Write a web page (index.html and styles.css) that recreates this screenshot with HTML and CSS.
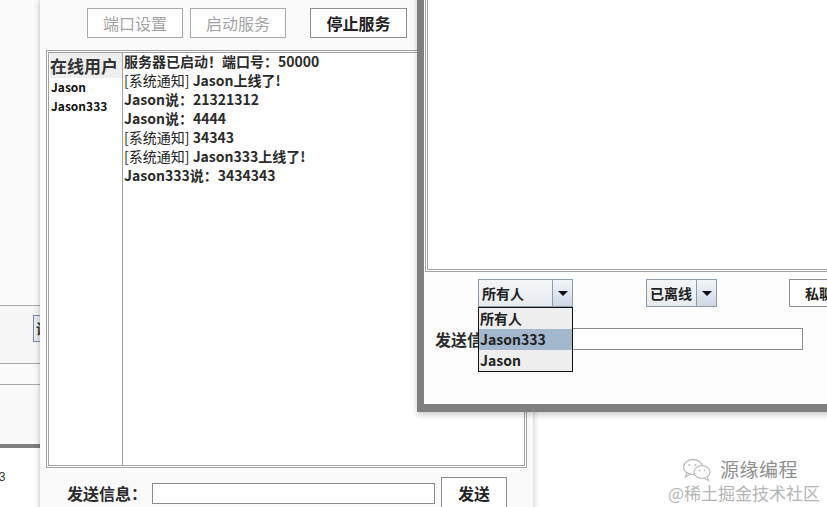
FILE: index.html
```html
<!DOCTYPE html>
<html lang="zh-CN">
<head>
  <meta charset="UTF-8">
  <meta name="viewport" content="width=device-width, initial-scale=1.0">
  <title>聊天室服务器</title>
  <link rel="stylesheet" href="styles.css">
</head>
<body>
  <div class="desktop">

    <!-- 后面那个窗口，只露出一条边 -->
    <div class="win win-back">
      <div class="back-sec back-top"></div>
      <div class="back-sec back-btnrow"><span class="back-btn">诶</span></div>
      <div class="back-sec back-mid"></div>
      <div class="back-sec back-low"></div>
      <div class="back-frame"></div>
      <div class="back-text">13</div>
    </div>

    <!-- 服务器窗口 -->
    <div class="win win-server">
      <div class="toolbar">
        <button class="btn" disabled>端口设置</button>
        <button class="btn" disabled>启动服务</button>
        <button class="btn btn-stop">停止服务</button>
      </div>

      <div class="panel">
        <div class="users">
          <div class="users-head">在线用户</div>
          <div class="user">Jason</div>
          <div class="user">Jason333</div>
        </div>
        <div class="messages">
          <div class="msg">服务器已启动！端口号：50000</div>
          <div class="msg"><span class="sys">[系统通知]</span> Jason上线了!</div>
          <div class="msg">Jason说：21321312</div>
          <div class="msg">Jason说：4444</div>
          <div class="msg"><span class="sys">[系统通知]</span> 34343</div>
          <div class="msg"><span class="sys">[系统通知]</span> Jason333上线了!</div>
          <div class="msg">Jason333说：3434343</div>
        </div>
      </div>

      <div class="send-row">
        <label class="send-label">发送信息：</label>
        <input class="send-input" type="text">
        <button class="btn btn-send">发送</button>
      </div>
    </div>

    <!-- 客户端窗口 -->
    <div class="win win-client">
      <div class="client-area"></div>

      <div class="combo-row">
        <div class="combo combo-target">
          <span class="combo-text">所有人</span>
          <span class="combo-arrow"></span>
        </div>
        <div class="combo combo-status">
          <span class="combo-text">已离线</span>
          <span class="combo-arrow"></span>
        </div>
        <button class="btn btn-private">私聊</button>
      </div>

      <div class="client-send">
        <label class="send-label">发送信息：</label>
        <input class="client-input" type="text">
      </div>

      <ul class="combo-list">
        <li>所有人</li>
        <li class="selected">Jason333</li>
        <li>Jason</li>
      </ul>
    </div>

    <div class="watermark">
      <div class="wm-top">
        <svg class="wm-icon" width="30" height="24" viewBox="0 0 30 24">
          <ellipse cx="11" cy="9" rx="9.5" ry="7.5" fill="none" stroke="#bdbdbd" stroke-width="1.3"/>
          <path d="M5 15 L3.5 19 L8.5 16" fill="none" stroke="#bdbdbd" stroke-width="1.3"/>
          <ellipse cx="20" cy="14" rx="8" ry="6.3" fill="#fff" stroke="#bdbdbd" stroke-width="1.3"/>
          <path d="M25 19 L26.5 22.5 L22 20" fill="#fff" stroke="#bdbdbd" stroke-width="1.3"/>
          <circle cx="7.5" cy="7" r="1.1" fill="#bdbdbd"/>
          <circle cx="13.5" cy="7" r="1.1" fill="#bdbdbd"/>
          <circle cx="17.5" cy="12.5" r="0.9" fill="#bdbdbd"/>
          <circle cx="22.5" cy="12.5" r="0.9" fill="#bdbdbd"/>
        </svg>
        <span class="wm-name">源缘编程</span>
      </div>
      <div class="wm-site">@稀土掘金技术社区</div>
    </div>

  </div>
</body>
</html>
```

FILE: styles.css
```css
* {
  box-sizing: border-box;
}

body {
  margin: 0;
  background: #fff;
  font-family: "Noto Sans CJK SC", "Microsoft YaHei", sans-serif;
  color: #2b2b2b;
}

.desktop {
  position: relative;
  width: 827px;
  height: 507px;
  overflow: hidden;
  background: #fff;
}

.win {
  position: absolute;
}

/* ---------- 后面的窗口 ---------- */

.win-back {
  left: -360px;
  top: 0;
  width: 400px;
  height: 507px;
  background: #f7f7f7;
}

.back-sec {
  border-bottom: 1px solid #a8a8a8;
}

.back-top {
  height: 306px;
  background: #fbfbfb;
}

.back-btnrow {
  height: 58px;
  display: flex;
  justify-content: flex-end;
  align-items: flex-start;
  padding-top: 9px;
}

.back-btn {
  display: block;
  width: 30px;
  height: 27px;
  margin-right: -23px;
  border: 1px solid #7a89ad;
  background: #e8ecf3;
  font-size: 14px;
  font-weight: bold;
  line-height: 25px;
  padding-left: 2px;
  color: #333;
}

.back-mid {
  height: 21px;
  background: #fbfbfb;
}

.back-low {
  height: 59px;
  border-bottom: none;
  background: #f9f9f9;
}

.back-frame {
  height: 4px;
  background: #7f7f7f;
}

.back-text {
  height: 60px;
  background: #fff;
  padding: 22px 0 0 352px;
  font-family: "Liberation Sans", sans-serif;
  font-size: 12px;
  color: #333;
}

/* ---------- 服务器窗口 ---------- */

.win-server {
  left: 40px;
  top: 0;
  width: 493px;
  height: 540px;
  background: #fafafa;
  box-shadow: 0 0 6px rgba(0, 0, 0, 0.28);
}

.btn {
  height: 30px;
  border: 1px solid #8e8e8e;
  background: #fff;
  font-family: inherit;
  font-size: 16px;
  color: #222;
  padding: 0;
  cursor: pointer;
}

.btn:disabled {
  color: #a3a3a3;
  border-color: #a8a8a8;
  cursor: default;
}

.toolbar {
  display: flex;
  padding: 8px 0 0 47px;
}

.toolbar .btn {
  width: 96px;
  margin-right: 7px;
}

.toolbar .btn-stop {
  width: 97px;
  margin-left: 17px;
  font-weight: bold;
}

.panel {
  display: flex;
  margin: 12px 0 0 6px;
  width: 481px;
  height: 418px;
  border: 3px double #a2a2a2;
  background: #fff;
}

.users {
  width: 75px;
  height: 414px;
  margin-top: -1px;
  margin-left: -1px;
  border: 1px solid #a2a2a2;
  border-top: none;
}

.users-head {
  height: 25px;
  margin: 1px 0 0 1px;
  background: #eeeeee;
  font-size: 17px;
  font-weight: bold;
  line-height: 25px;
  color: #333;
}

.user {
  height: 19px;
  line-height: 17px;
  padding-left: 2px;
  font-size: 12px;
  font-weight: bold;
  color: #111;
}

.messages {
  padding: 0 0 0 1px;
}

.msg {
  height: 19px;
  line-height: 17px;
  font-size: 14px;
  font-weight: bold;
  color: #2b2b2b;
  white-space: nowrap;
}

.sys {
  font-weight: normal;
  color: #222;
}

.send-row {
  display: flex;
  align-items: center;
  margin-top: 9px;
  padding-left: 27px;
  height: 32px;
}

.send-label {
  font-size: 16px;
  font-weight: bold;
  color: #2b2b2b;
  white-space: nowrap;
}

.send-input {
  width: 283px;
  height: 21px;
  margin-left: 5px;
  border: 1px solid #8a8a8a;
  background: #fff;
}

.btn-send {
  width: 66px;
  height: 32px;
  margin-left: 6px;
  font-weight: bold;
}

/* ---------- 客户端窗口 ---------- */

.win-client {
  left: 417px;
  top: -10px;
  width: 430px;
  height: 422px;
  border-left: 7px solid #7f7f7f;
  border-bottom: 8px solid #7f7f7f;
  padding-left: 1px;
  background: #fdfdfd;
  box-shadow: 0 3px 6px rgba(0, 0, 0, 0.2);
}

.client-area {
  height: 282px;
  border: 3px double #a2a2a2;
  border-right: none;
  background: #fff;
}

.combo-row {
  display: flex;
  align-items: center;
  margin-top: 7px;
  padding-left: 53px;
  height: 28px;
}

.combo {
  display: flex;
  flex-shrink: 0;
  height: 28px;
  border: 1px solid #8d9bab;
}

.combo-target {
  width: 95px;
}

.combo-status {
  width: 71px;
  margin-left: 73px;
}

.combo-text {
  flex: 1;
  padding-left: 3px;
  background: linear-gradient(#f3f5f8, #e7ebf0);
  border-right: 1px solid #8d9bab;
  font-size: 14px;
  font-weight: bold;
  line-height: 26px;
  color: #222;
  white-space: nowrap;
}

.combo-arrow {
  position: relative;
  width: 19px;
  background: linear-gradient(#f1f5f9, #cdd8e4);
}

.combo-arrow::after {
  content: "";
  position: absolute;
  left: 5px;
  top: 11px;
  border-left: 5px solid transparent;
  border-right: 5px solid transparent;
  border-top: 5px solid #111;
}

.btn-private {
  flex-shrink: 0;
  width: 70px;
  height: 28px;
  margin-left: 72px;
  font-size: 14px;
  font-weight: bold;
  text-align: left;
  padding-left: 15px;
  background: #fff;
}

.client-send {
  display: flex;
  align-items: center;
  margin-top: 21px;
  padding-left: 10px;
  height: 22px;
}

.client-input {
  width: 286px;
  height: 22px;
  margin-left: 2px;
  border: 1px solid #8a8a8a;
  background: #fff;
}

.combo-list {
  position: absolute;
  left: 54px;
  top: 317px;
  width: 95px;
  margin: 0;
  padding: 0;
  list-style: none;
  border: 1px solid #111;
  background: #eeeeee;
}

.combo-list li {
  height: 21px;
  line-height: 21px;
  padding-left: 1px;
  font-size: 14px;
  font-weight: bold;
  color: #222;
}

.combo-list .selected {
  background: #a3b8cc;
}

/* ---------- 水印 ---------- */

.watermark {
  position: absolute;
  left: 668px;
  top: 455px;
  color: #aaa;
}

.wm-top {
  display: flex;
  align-items: center;
  height: 28px;
  padding-left: 14px;
}

.wm-icon {
  margin-top: 2px;
}

.wm-name {
  margin-left: 8px;
  font-size: 19px;
  line-height: 24px;
  color: #8f8f8f;
  letter-spacing: 0.5px;
}

.wm-site {
  font-size: 17px;
  line-height: 20px;
  color: #b4b4b4;
}
```
